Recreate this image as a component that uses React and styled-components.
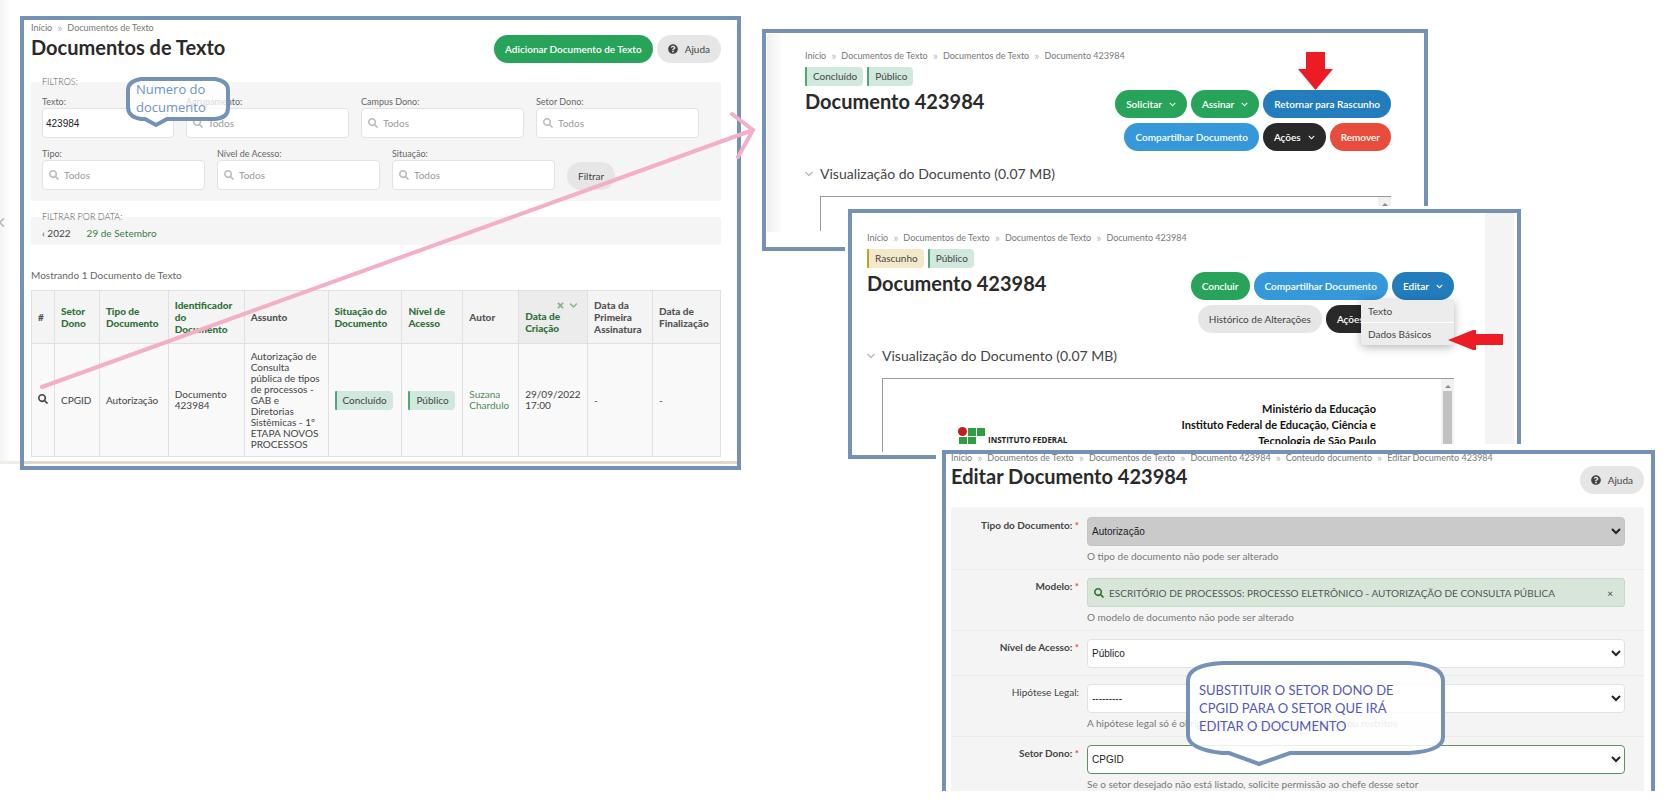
import React from 'react';
import styled, { createGlobalStyle, css } from 'styled-components';
import { FaSearch, FaQuestionCircle, FaChevronDown, FaTimes, FaChevronLeft } from 'react-icons/fa';

const GlobalStyle = createGlobalStyle`
    * {
        box-sizing: border-box;
    }

    body {
        margin: 0;
        background: #fff;
        color: #444;
        font: 10px/14px Lato, sans-serif;
    }

    a {
        color: inherit;
        text-decoration: none;
    }

    button, input, select {
        font-family: inherit;
        font-size: 10px;
        margin: 0;
    }
`

const frame = '#7492b8';

/* Board: the screens overlap each other in a single grid row */

const Board = styled.main`
    position: relative;
    display: grid;
    grid-template-columns:
        minmax(0, 20fr) minmax(0, 721fr) minmax(0, 21fr) minmax(0, 86fr) minmax(0, 94fr)
        minmax(0, 486fr) minmax(0, 93fr) minmax(0, 134fr) minmax(0, 25fr);
    align-items: start;
    min-height: 100vh;
    overflow: hidden;
`

const SideEdge = styled.div`
    grid-area: 1 / 1 / 2 / 2;
    display: flex;
    align-items: center;
    height: 464px;
    padding-bottom: 17px;
    color: #bbb;
    border-bottom: 3px solid #f0ede8;
    background: linear-gradient(to right, #f4f4f4, #fff 10px);

    svg {
        margin-left: -4px;
    }
`

const Screen = styled.section`
    position: relative;
    border: 4px solid ${frame};
    background-color: #fff;
`

const ListScreen = styled(Screen)`
    grid-area: 1 / 2 / 2 / 3;
    margin-top: 16px;
    padding: 1px 0 2px;
`

const DoneScreen = styled(Screen)`
    grid-area: 1 / 4 / 2 / 7;
    margin-top: 29px;
    padding: 16px 33px 16px 39px;
    background: linear-gradient(to right, #efefef, #fff) 1px 1px / 16px 198px no-repeat #fff;
`

const DraftScreen = styled(Screen)`
    grid-area: 1 / 5 / 2 / 8;
    margin-top: 209px;
    padding: 18px 63px 3px 15px;
    background: linear-gradient(#f4f4f4, #f4f4f4) right 3px top 0 / 29px 231px no-repeat #fff;
    box-shadow: 0 0 0 3px #fff;
`

const EditScreen = styled(Screen)`
    grid-area: 1 / 6 / 2 / 9;
    margin-top: 450px;
    padding: 0 7px 0 5px;
    border-bottom: 0;
    box-shadow: 0 0 0 6px #fff;
`

const ScreenBody = styled.div`
    padding: 0 16px 0 7px;
`

/* Shared parts */

const CrumbList = styled.nav`
    display: flex;
    gap: 5px;
    color: #777;
    font-size: 9px;
    line-height: 14px;
    white-space: nowrap;
`

const CrumbMark = styled.span`
    color: #bbb;
    font-size: 12px;
`

const Header = styled.header`
    display: flex;
    justify-content: space-between;
    align-items: flex-start;
`

const Title = styled.h1`
    margin: 0;
    color: #2a2a2a;
    font-size: 20px;
    font-weight: 700;
    line-height: 26px;
    white-space: nowrap;
`

const Actions = styled.div`
    position: relative;
    display: flex;
    flex-wrap: wrap;
    justify-content: flex-end;
    gap: 5px 4px;
    max-width: ${props => props.$width || 'none'};
`

const tones = {
    green: '#27a35a',
    navy: '#237dbd',
    sky: '#3498db',
    dark: '#292929',
    red: '#e74c3c',
};

const Button = styled.button`
    display: inline-flex;
    align-items: center;
    gap: 7px;
    height: 28px;
    padding: 0 11px;
    border: 0;
    border-radius: 14px;
    background: ${props => tones[props.$tone] || '#e6e6e6'};
    color: ${props => props.$tone ? '#fff' : '#444'};
    font-weight: ${props => props.$tone ? 600 : 400};
    white-space: nowrap;

    svg {
        font-size: ${props => props.$tone ? '7px' : '10px'};
    }
`

const Badges = styled.div`
    display: flex;
    gap: 4px;
    margin: 4px 0 2px;
`

const Badge = styled.span`
    display: inline-block;
    padding: 0 6px;
    border-left: 2px solid ${props => props.$draft ? '#c0a02c' : '#4fa67a'};
    border-radius: 1px 4px 4px 1px;
    background: ${props => props.$draft ? '#f3e9c8' : '#d0e9dc'};
    color: #444;
    line-height: 19px;
`

function Crumbs({ items }) {
    return (
        <CrumbList aria-label="Navegação">
            {items.map((item, i) => (
                <React.Fragment key={i}>
                    {i > 0 && <CrumbMark>»</CrumbMark>}
                    <a href="#">{item}</a>
                </React.Fragment>
            ))}
        </CrumbList>
    )
}

/* Document list */

const ListHeader = styled(Header)`
    margin-bottom: 13px;

    ${Title} {
        line-height: 24px;
    }
`

const Fieldset = styled.fieldset`
    margin: 0;
    padding: ${props => props.$slim ? '3px 11px 5px' : '8px 11px 11px'};
    margin-top: ${props => props.$slim ? '10px' : 0};
    border: 0;
    border-radius: 3px;
    background: #f5f5f5;
`

const Legend = styled.legend`
    padding: 0;
    color: #555;
    font-size: 9px;
    font-weight: 300;
    line-height: 12px;
`

const Filters = styled.div`
    display: flex;
    flex-wrap: wrap;
    align-items: flex-end;
    gap: 10px 12px;
`

const Field = styled.label`
    display: block;
    width: ${props => props.$short ? '132px' : '163px'};
    color: #666;
    font-size: 9px;
    line-height: 12px;
`

const TextBox = styled.input`
    display: block;
    width: 100%;
    height: 30px;
    padding: 0 3px;
    border: 1px solid #e2e2e2;
    border-radius: 4px;
    background: #fff;
    color: #222;
    font: 10px "Liberation Sans", Arial, sans-serif;
`

const SearchBox = styled.span`
    display: flex;
    align-items: center;
    gap: 5px;
    height: 30px;
    padding: 0 6px;
    border: 1px solid #e2e2e2;
    border-radius: 4px;
    background: #fff;
    color: #bbb;

    input {
        width: 100%;
        min-width: 0;
        padding: 0;
        border: 0;
        background: none;
    }

    input::placeholder {
        color: #999;
    }
`

const SearchGlyph = styled(FaSearch)`
    flex: none;
    width: 10px;
    height: 10px;
`

const Dates = styled.div`
    display: flex;
    gap: 16px;
    color: #444;

    a:last-child {
        color: #3c7d43;
    }
`

const Count = styled.p`
    margin: 23px 0 8px;
    color: #666;
`

const Table = styled.table`
    width: 100%;
    border-collapse: collapse;
    table-layout: fixed;
    color: #444;

    th, td {
        padding: 0 0 0 6px;
        border: 1px solid #e0e0e0;
        text-align: left;
        font-size: 10px;
    }

    th {
        height: 53px;
        background: #f4f4f4;
        color: #555;
        font-weight: 900;
        line-height: 12px;
    }

    td {
        height: 113px;
        background: #f9f9f9;
        line-height: 11px;
    }
`

const SortTh = styled.th`
    &&& {
        color: #2f7238;
        ${props => props.$active && css`background: #ececec;`}
    }
`

const SortMarks = styled.span`
    display: flex;
    justify-content: flex-end;
    gap: 4px;
    padding-right: 9px;
    color: #86b38c;
    font-size: 9px;
`

const Author = styled.a`
    color: #4f8a57;
`

const Ground = styled.div`
    height: 3px;
    margin-top: 4px;
    background: #ded8cd;
`

function SearchField({ label }) {
    return (
        <Field>
            {label}
            <SearchBox>
                <SearchGlyph />
                <input type="text" placeholder="Todos" />
            </SearchBox>
        </Field>
    )
}

const widths = [23, 45, 69, 76, 84, 74, 61, 56, 69, 65, 68];

function DocumentTable() {
    return (
        <Table>
            <colgroup>
                {widths.map((w, i) => <col key={i} style={{ width: `${w / 6.9}%` }} />)}
            </colgroup>
            <thead>
                <tr>
                    <th>#</th>
                    <SortTh>Setor Dono</SortTh>
                    <SortTh>Tipo de Documento</SortTh>
                    <SortTh>Identificador<br />do<br />Documento</SortTh>
                    <th>Assunto</th>
                    <SortTh>Situação do Documento</SortTh>
                    <SortTh>Nível de<br />Acesso</SortTh>
                    <th>Autor</th>
                    <SortTh $active>
                        <SortMarks><FaTimes /><FaChevronDown /></SortMarks>
                        Data de<br />Criação
                    </SortTh>
                    <th>Data da Primeira Assinatura</th>
                    <th>Data de Finalização</th>
                </tr>
            </thead>
            <tbody>
                <tr>
                    <td><a href="#" aria-label="Visualizar"><FaSearch /></a></td>
                    <td>CPGID</td>
                    <td>Autorização</td>
                    <td>Documento 423984</td>
                    <td>
                        Autorização de<br />Consulta<br />pública de tipos<br />de processos -<br />GAB e<br />
                        Diretorias<br />Sistêmicas - 1º<br />ETAPA NOVOS<br />PROCESSOS
                    </td>
                    <td><Badge>Concluído</Badge></td>
                    <td><Badge>Público</Badge></td>
                    <td><Author href="#">Suzana<br />Chardulo</Author></td>
                    <td>29/09/2022<br />17:00</td>
                    <td>-</td>
                    <td>-</td>
                </tr>
            </tbody>
        </Table>
    )
}

/* Document view */

const DocumentHeader = styled(Header)`
    ${Actions} {
        margin-top: 2px;
    }
`

const Section = styled.section`
    margin-top: 12px;
`

const SectionTitle = styled.h2`
    display: flex;
    align-items: center;
    gap: 7px;
    margin: 0 0 11px;
    color: #444;
    font-size: 14px;
    font-weight: 400;
    line-height: 22px;
    white-space: nowrap;

    svg {
        width: 8px;
        color: #bbb;
    }
`

const Viewer = styled.div`
    display: flex;
    justify-content: space-between;
    height: ${props => props.$tall ? '74px' : '35px'};
    margin-left: 15px;
    border: solid #9a9a9a;
    border-width: 1px 0 0 1px;
    overflow: hidden;
`

const Scrollbar = styled.div`
    flex: none;
    width: 13px;
    padding: 6px 2px 0;
    background: #f1f1f1;

    &::before {
        content: '';
        display: block;
        width: 0;
        margin: 0 auto 3px;
        border: solid transparent;
        border-width: 0 3px 3px;
        border-bottom-color: #8a8a8a;
    }
`

const Thumb = styled.div`
    height: 70px;
    background: #c1c1c1;
`

const Letterhead = styled.div`
    flex: 1;
    display: flex;
    justify-content: space-between;
    align-items: flex-start;
    padding: 22px 65px 0 75px;
`

const Institute = styled.div`
    display: flex;
    align-items: flex-end;
    gap: 3px;
    margin-top: 26px;
    color: #222;
    font: 700 8px/10px "Open Sans", sans-serif;
    white-space: nowrap;
`

const Ministry = styled.p`
    margin: 0;
    color: #111;
    font-size: 11px;
    font-weight: 700;
    line-height: 16px;
    text-align: right;
    white-space: nowrap;
`

const Menu = styled.ul`
    position: absolute;
    top: 28px;
    right: 0;
    width: 93px;
    margin: 0;
    padding: 0;
    list-style: none;
    border-radius: 0 4px 4px 4px;
    background: #ececec;
    box-shadow: 0 2px 10px rgba(0, 0, 0, .3);
`

const MenuItem = styled.li`
    padding: 4px 7px;

    & + & {
        border-top: 1px solid #fff;
    }
`

function DocumentHead({ status, draft, actionsWidth, children }) {
    return (
        <>
            <Crumbs items={['Início', 'Documentos de Texto', 'Documentos de Texto', 'Documento 423984']} />
            <Badges>
                <Badge $draft={draft}>{status}</Badge>
                <Badge>Público</Badge>
            </Badges>
            <DocumentHeader>
                <Title>Documento 423984</Title>
                <Actions $width={actionsWidth}>{children}</Actions>
            </DocumentHeader>
        </>
    )
}

function Logo() {
    return (
        <svg width="27" height="18" viewBox="0 0 27 18" aria-hidden="true">
            <circle cx="4.5" cy="4.5" r="4.5" fill="#c8191e" />
            <g fill="#2f9e41">
                <rect x="10" y="1" width="8" height="8" />
                <rect x="19" y="1" width="8" height="8" />
                <rect x="1" y="10" width="8" height="8" />
                <rect x="10" y="10" width="8" height="8" />
            </g>
        </svg>
    )
}

/* Edit form */

const EditTop = styled.div`
    margin-top: -3px;
`

const EditHeader = styled(Header)`
    margin-bottom: 13px;

    ${Title} {
        line-height: 22px;
    }

    ${Button} {
        margin-top: 1px;
    }
`

const Form = styled.form`
    padding-top: 2px;
    border-radius: 3px 3px 0 0;
    background: #f4f4f4;
`

const FormRow = styled.div`
    display: grid;
    grid-template-columns: 128px minmax(0, 1fr);
    column-gap: 8px;
    padding: 8px 19px 7px 0;

    & + & {
        border-top: 1px solid #ebebeb;
    }

    &:last-child {
        padding-bottom: 1px;
    }
`

const RowLabel = styled.label`
    padding-top: 1px;
    color: #444;
    font-weight: ${props => props.$required ? 700 : 400};
    text-align: right;

    &::after {
        content: ${props => props.$required ? '" *"' : 'none'};
        color: #e74c3c;
    }
`

const Select = styled.select`
    display: block;
    width: 100%;
    height: 29px;
    padding: 0;
    border: 1px solid ${props => props.$focus ? '#5c9164' : '#e2e2e2'};
    border-radius: 4px;
    background: #fff;
    color: #222;
    font: 10px "Liberation Sans", Arial, sans-serif;

    &:disabled {
        border-color: #c4c4c4;
        background: #cacaca;
        color: #222;
        opacity: 1;
    }
`

const ModelBox = styled.div`
    display: flex;
    align-items: center;
    gap: 5px;
    height: 29px;
    padding: 0 11px 0 6px;
    border: 1px solid #c5d9c8;
    border-radius: 3px;
    background: #d7e6d9;
    color: #2f7238;

    input {
        flex: 1;
        padding: 0;
        border: 0;
        background: none;
        color: #555;
    }

    button {
        padding: 0;
        border: 0;
        background: none;
        color: #444;
    }
`

const Help = styled.small`
    display: block;
    margin-top: 4px;
    color: #777;
    font-size: 10px;
    line-height: 12px;
    white-space: nowrap;
`

function SelectRow({ id, label, value, help, required, disabled, focus }) {
    return (
        <FormRow>
            <RowLabel htmlFor={id} $required={required}>{label}</RowLabel>
            <div>
                <Select id={id} disabled={disabled} $focus={focus}>
                    <option>{value}</option>
                </Select>
                {help && <Help>{help}</Help>}
            </div>
        </FormRow>
    )
}

/* Notes drawn over the screens */

const Overlay = styled.svg`
    position: absolute;
    overflow: visible;
    pointer-events: none;
`

const Trail = styled(Overlay)`
    top: 112px;
    left: 2.44%;
    width: 42.5%;
    height: 276px;
`

const DownArrow = styled(Overlay)`
    top: 19px;
    right: 91px;
`

const LeftArrow = styled(Overlay)`
    top: 117px;
    right: 14px;
`

const Note = styled.div`
    position: absolute;
    isolation: isolate;
    top: ${props => props.$top};
    left: ${props => props.$left};
    width: ${props => props.$width};
    padding: ${props => props.$pad};
    color: ${props => props.$color};
    font: 13px/18px ${props => props.$font || 'Lato'}, sans-serif;
    white-space: nowrap;

    svg {
        position: absolute;
        top: 0;
        left: 0;
        z-index: -1;
        overflow: visible;
    }
`

const ajuda = <Button type="button"><FaQuestionCircle /> Ajuda</Button>;

export default function App() {
    return (
        <Board>
            <GlobalStyle />

            <SideEdge><FaChevronLeft size={11} /></SideEdge>

            <ListScreen>
                <ScreenBody>
                    <Crumbs items={['Início', 'Documentos de Texto']} />
                    <ListHeader>
                        <Title>Documentos de Texto</Title>
                        <Actions>
                            <Button type="button" $tone="green">Adicionar Documento de Texto</Button>
                            {ajuda}
                        </Actions>
                    </ListHeader>

                    <Fieldset>
                        <Legend>FILTROS:</Legend>
                        <Filters>
                            <Field $short>
                                Texto:
                                <TextBox type="text" defaultValue="423984" />
                            </Field>
                            <SearchField label="Agrupamento:" />
                            <SearchField label="Campus Dono:" />
                            <SearchField label="Setor Dono:" />
                            <SearchField label="Tipo:" />
                            <SearchField label="Nível de Acesso:" />
                            <SearchField label="Situação:" />
                            <Button type="button">Filtrar</Button>
                        </Filters>
                    </Fieldset>

                    <Fieldset $slim>
                        <Legend>FILTRAR POR DATA:</Legend>
                        <Dates>
                            <a href="#">‹ 2022</a>
                            <a href="#">29 de Setembro</a>
                        </Dates>
                    </Fieldset>

                    <Count>Mostrando 1 Documento de Texto</Count>
                    <DocumentTable />
                </ScreenBody>
                <Ground />

                <Note $top="57px" $left="102px" $width="104px" $pad="3px 0 0 10px" $color="#6f93c4" $font='"Open Sans"'>
                    <svg width="104" height="51" viewBox="0 0 104 51">
                        <path
                            d="M15 2H89Q102 4 102 13V31Q102 41 89 42H41L30 48L19 42H15Q2 40 2 30V13Q2 4 15 2Z"
                            fill="#fff" fillOpacity=".75" stroke={frame} strokeWidth="4"
                        />
                    </svg>
                    Numero do<br />documento
                </Note>
            </ListScreen>

            <DoneScreen>
                <DocumentHead status="Concluído" actionsWidth="290px">
                    <Button type="button" $tone="green">Solicitar <FaChevronDown /></Button>
                    <Button type="button" $tone="green">Assinar <FaChevronDown /></Button>
                    <Button type="button" $tone="navy">Retornar para Rascunho</Button>
                    <Button type="button" $tone="sky">Compartilhar Documento</Button>
                    <Button type="button" $tone="dark">Ações <FaChevronDown /></Button>
                    <Button type="button" $tone="red">Remover</Button>
                </DocumentHead>
                <Section>
                    <SectionTitle><FaChevronDown /> Visualização do Documento (0.07 MB)</SectionTitle>
                    <Viewer>
                        <span />
                        <Scrollbar />
                    </Viewer>
                </Section>
                <DownArrow width="35" height="38" viewBox="0 0 35 38">
                    <path d="M8 0H27V17H35L17.500 38L0 17H8Z" fill="#ed1c24" />
                </DownArrow>
            </DoneScreen>

            <DraftScreen>
                <DocumentHead status="Rascunho" draft actionsWidth="270px">
                    <Button type="button" $tone="green">Concluir</Button>
                    <Button type="button" $tone="sky">Compartilhar Documento</Button>
                    <Button type="button" $tone="navy">Editar <FaChevronDown /></Button>
                    <Button type="button">Histórico de Alterações</Button>
                    <Button type="button" $tone="dark">Ações <FaChevronDown /></Button>
                    <Button type="button" $tone="red">Remover</Button>
                    <Menu>
                        <MenuItem><a href="#">Texto</a></MenuItem>
                        <MenuItem><a href="#">Dados Básicos</a></MenuItem>
                    </Menu>
                </DocumentHead>
                <Section>
                    <SectionTitle><FaChevronDown /> Visualização do Documento (0.07 MB)</SectionTitle>
                    <Viewer $tall>
                        <Letterhead>
                            <Institute><Logo /> INSTITUTO FEDERAL</Institute>
                            <Ministry>
                                Ministério da Educação<br />
                                Instituto Federal de Educação, Ciência e<br />
                                Tecnologia de São Paulo
                            </Ministry>
                        </Letterhead>
                        <Scrollbar><Thumb /></Scrollbar>
                    </Viewer>
                </Section>
                <LeftArrow width="55" height="20" viewBox="0 0 55 20">
                    <path d="M0 10L25 0H28V4H55V15H28V20H25Z" fill="#ed1c24" />
                </LeftArrow>
            </DraftScreen>

            <EditScreen>
                <EditTop>
                    <Crumbs
                        items={[
                            'Início', 'Documentos de Texto', 'Documentos de Texto',
                            'Documento 423984', 'Conteudo documento', 'Editar Documento 423984',
                        ]}
                    />
                    <EditHeader>
                        <Title>Editar Documento 423984</Title>
                        {ajuda}
                    </EditHeader>
                </EditTop>
                <Form>
                    <SelectRow
                        id="tipo" label="Tipo do Documento:" value="Autorização"
                        help="O tipo de documento não pode ser alterado" required disabled
                    />
                    <FormRow>
                        <RowLabel htmlFor="modelo" $required>Modelo:</RowLabel>
                        <div>
                            <ModelBox>
                                <SearchGlyph />
                                <input
                                    id="modelo" type="text" readOnly
                                    value="ESCRITÓRIO DE PROCESSOS: PROCESSO ELETRÔNICO - AUTORIZAÇÃO DE CONSULTA PÚBLICA"
                                />
                                <button type="button" aria-label="Limpar">×</button>
                            </ModelBox>
                            <Help>O modelo de documento não pode ser alterado</Help>
                        </div>
                    </FormRow>
                    <SelectRow id="nivel" label="Nível de Acesso:" value="Público" required />
                    <SelectRow
                        id="hipotese" label="Hipótese Legal:" value="---------"
                        help="A hipótese legal só é obrigatória para documentos sigilosos ou restritos"
                    />
                    <SelectRow
                        id="setor" label="Setor Dono:" value="CPGID"
                        help="Se o setor desejado não está listado, solicite permissão ao chefe desse setor" required focus
                    />
                </Form>

                <Note $top="207px" $left="240px" $width="259px" $pad="20px 0 0 13px" $color="#5257b8">
                    <svg width="259" height="104" viewBox="0 0 259 104">
                        <path
                            d="M36 2H223Q257 4 257 20V76Q257 90 223 92H104L73 103L43 92H36Q2 88 2 74V20Q2 4 36 2Z"
                            fill="#fff" fillOpacity=".85" stroke={frame} strokeWidth="4"
                        />
                    </svg>
                    SUBSTITUIR O SETOR DONO DE<br />
                    CPGID PARA O SETOR QUE IRÁ<br />
                    EDITAR O DOCUMENTO
                </Note>
            </EditScreen>

            <Trail viewBox="0 0 714 276" preserveAspectRatio="none">
                <path d="M1 275L712 18M691 2L712 18L697 45" fill="none" stroke="#f4aec5" strokeWidth="4" strokeLinecap="round" />
            </Trail>
        </Board>
    )
}
